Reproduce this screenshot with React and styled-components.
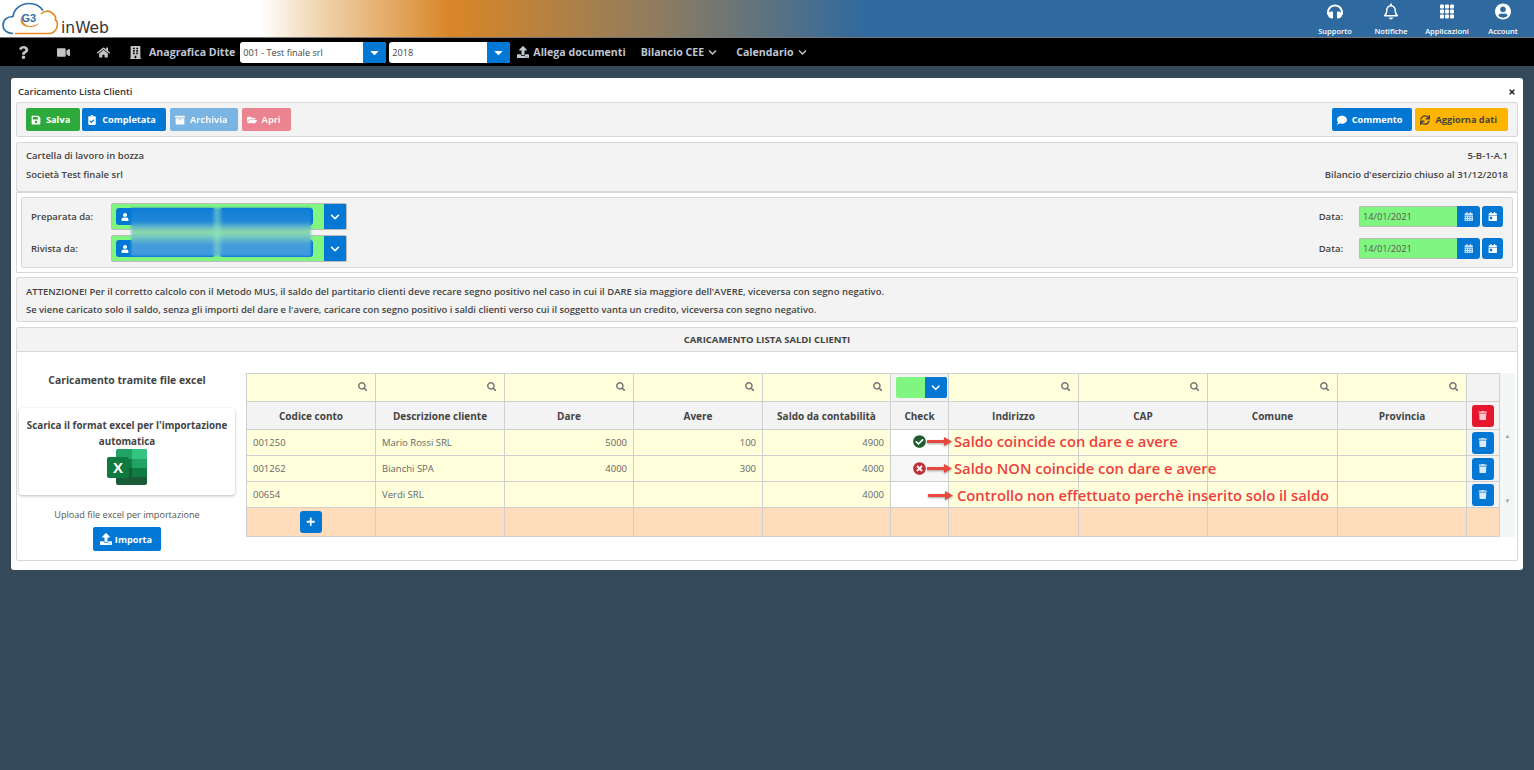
import React from "react";
import styled, { createGlobalStyle } from "styled-components";
import {
  FaQuestion, FaVideo, FaHome, FaBuilding, FaUpload, FaChevronDown, FaSave, FaClipboardCheck,
  FaArchive, FaFolderOpen, FaComment, FaSync, FaUser, FaCalendarAlt, FaCalendarDay, FaSearch,
  FaTrash, FaPlus, FaCheckCircle, FaTimesCircle, FaTimes, FaCaretDown, FaUserCircle,
  FaHeadphones, FaRegBell,
} from "react-icons/fa";
import { BsGrid3X3GapFill } from "react-icons/bs";

const GlobalStyle = createGlobalStyle`
  html, body { margin: 0; padding: 0; height: 100%; }
  body {
    background: #34495a;
    font-family: "Open Sans", "Liberation Sans", sans-serif;
    font-size: 9.5px;
    color: #444;
  }
`;

const Page = styled.div`
  min-height: 770px;
  background: #34495a;
`;

// top band with logo and the four shortcuts
const TopBar = styled.header`
  height: 37px;
  display: flex;
  justify-content: space-between;
  background: linear-gradient(90deg, #fff 0, #fff 260px, #f0d4ae 320px, #d98627 450px, #8d7c60 660px, #2e69a0 870px, #2e69a0 100%);
  border-bottom: 1px solid #777;
`;

const Logo = styled.div`
  display: flex;
  align-items: flex-end;
`;

const LogoWord = styled.span`
  font-family: "DejaVu Sans", sans-serif;
  font-size: 15.5px;
  color: #333;
  line-height: 18px;
`;

const Shortcuts = styled.nav`
  display: flex;
  padding-right: 3px;
`;

const Shortcut = styled.a`
  width: 56px;
  display: flex;
  flex-direction: column;
  align-items: center;
  color: #fff;
  font-size: 7.5px;
  font-weight: 600;
  padding-top: 2px;
  svg { font-size: ${(p) => p.$is || 16}px; height: 19px; margin-bottom: 5px; }
`;

const NavBar = styled.div`
  height: 28px;
  background: #000;
  display: flex;
  align-items: center;
  color: #bfc6d4;
  font-size: 10.6px;
  font-weight: 700;
`;

const NavIcon = styled.span`
  width: ${(p) => p.$w}px;
  display: flex;
  justify-content: center;
  font-size: 13px;
  color: #c4c4c4;
`;

const NavLink = styled.a`
  display: flex;
  align-items: center;
  gap: 4px;
  margin-left: ${(p) => p.$ml || 0}px;
  white-space: nowrap;
  svg { font-size: ${(p) => p.$is || 9}px; }
`;

const NavSelect = styled.div`
  width: ${(p) => p.$w}px;
  height: 21px;
  margin-left: ${(p) => p.$ml}px;
  display: flex;
  background: #fff;
  border-radius: 3px;
  overflow: hidden;
  color: #444;
  font-size: 9.1px;
  font-weight: 400;
`;

const NavSelectValue = styled.div`
  flex: 1;
  display: flex;
  align-items: center;
  padding-left: 3px;
`;

const BlueCaret = styled.div`
  width: 23px;
  background: #0277d4;
  color: #fff;
  display: flex;
  align-items: center;
  justify-content: center;
  font-size: 13px;
`;

const Card = styled.main`
  margin: 12px 11px 0;
  height: 492px;
  box-sizing: border-box;
  background: #fff;
  border-radius: 3px;
  padding: 0 5px;
`;

const CardTitle = styled.div`
  height: 24px;
  box-sizing: border-box;
  padding: 3px 2px 0 2px;
  display: flex;
  align-items: center;
  justify-content: space-between;
  font-weight: 600;
  color: #333;
  svg { font-size: 8px; color: #222; }
`;

const Panel = styled.section`
  background: #f3f3f3;
  border: 1px solid #d8d8d8;
  border-radius: 2px;
  box-sizing: border-box;
`;

const Toolbar = styled(Panel)`
  height: 35px;
  margin-bottom: 5px;
  display: flex;
  align-items: center;
  justify-content: space-between;
  padding: 0 9px;
`;

const ButtonGroup = styled.div`
  display: flex;
  gap: ${(p) => p.$gap || 2}px;
`;

const Btn = styled.button`
  height: ${(p) => p.$h || 23}px;
  border: 0;
  border-radius: 2px;
  padding: 0 ${(p) => p.$pr || 10}px 0 5px;
  margin-left: ${(p) => p.$ml || 0}px;
  background: ${(p) => p.$bg || "#0277d4"};
  color: ${(p) => p.$fg || "#fff"};
  opacity: ${(p) => (p.$off ? 0.5 : 1)};
  font-family: inherit;
  font-size: 9.2px;
  font-weight: 700;
  display: flex;
  align-items: center;
  gap: 5px;
  svg { font-size: 10px; }
`;

const ImportBtn = styled(Btn)`
  padding: 0 9px 0 7px;
  gap: 2px;
  svg { font-size: 12px; margin-right: 1px; }
`;

const InfoPanel = styled(Panel)`
  height: 50px;
  padding: 6px 9px 0;
  display: flex;
  flex-direction: column;
  gap: 6px;
  font-weight: 600;
  color: #444;
`;

const InfoRow = styled.div`
  display: flex;
  justify-content: space-between;
  line-height: 13px;
`;

const OuterFrame = styled.div`
  border: 1px solid #d8d8d8;
  padding: 4px;
  margin-bottom: 4px;
  height: 81px;
  box-sizing: border-box;
`;

const SignPanel = styled(Panel)`
  height: 100%;
  padding: 5px 9px 0 9px;
  position: relative;
`;

const SignRow = styled.div`
  height: 27px;
  margin-bottom: 5px;
  display: flex;
  align-items: center;
`;

const SignLabel = styled.div`
  width: 80px;
  font-weight: 600;
`;

const UserSelect = styled.div`
  width: 236px;
  height: 27px;
  box-sizing: border-box;
  border: 1px solid #bbb;
  background: #80f580;
  border-radius: 2px;
  overflow: hidden;
  display: flex;
  align-items: stretch;
`;

const UserTags = styled.div`
  flex: 1;
  padding: 4px 11px 4px 4px;
  display: flex;
  gap: 5px;
`;

const UserTag = styled.div`
  flex: ${(p) => p.$f};
  background: #0277d4;
  border-radius: 3px;
  color: #fff;
  display: flex;
  align-items: center;
  padding-left: 5px;
  font-size: 8px;
`;

const WideCaret = styled(BlueCaret)`
  width: 22px;
  font-size: 10px;
`;

// redacted names in the screenshot: blurred strip over both selects
const Blur = styled.div`
  position: absolute;
  left: 109px;
  top: 10px;
  width: 180px;
  height: 48px;
  background:
    linear-gradient(90deg, transparent 45%, rgba(150, 235, 190, 0.45) 47%, rgba(150, 235, 190, 0.45) 48.5%, transparent 51%),
    linear-gradient(180deg, #0f7cd6 0, #2088d8 28%, #6dbfc4 42%, #8fdcaa 50%, #74c8c0 60%, #459ddc 76%, #3f98de 100%);
  filter: blur(0.8px);
`;

const DateField = styled.div`
  margin-left: auto;
  display: flex;
  align-items: center;
  font-weight: 600;
`;

const DateInput = styled.div`
  width: 98px;
  height: 21px;
  margin-left: 16px;
  background: #80f580;
  border: 1px solid #bbb;
  border-right: 0;
  border-radius: 2px 0 0 2px;
  padding-left: 3px;
  box-sizing: border-box;
  line-height: 19px;
  font-size: 9.2px;
  font-weight: 400;
  color: #555;
`;

const IconBtn = styled.button`
  width: ${(p) => p.$w || 22}px;
  height: ${(p) => p.$h || 22}px;
  border: 0;
  padding: 0;
  margin-left: ${(p) => p.$ml || 0}px;
  border-radius: ${(p) => p.$r || "3px"};
  background: ${(p) => p.$bg || "#0277d4"};
  color: ${(p) => p.$fg || "#fff"};
  display: flex;
  align-items: center;
  justify-content: center;
  font-size: 9.5px;
`;

const PlusBtn = styled(IconBtn)`
  margin: 0 auto;
`;

const NoticePanel = styled(Panel)`
  height: 45px;
  padding: 7px 9px 0;
  margin-bottom: 5px;
  display: flex;
  flex-direction: column;
  gap: 5px;
  line-height: 13px;
  font-weight: 600;
  color: #444;
`;

const NoticeLine = styled.div`
  font-size: ${(p) => p.$fs}px;
`;

const LoadPanel = styled.section`
  border: 1px solid #d8d8d8;
  border-radius: 2px;
  height: 234px;
  box-sizing: border-box;
`;

const LoadHeader = styled.div`
  height: 24px;
  box-sizing: border-box;
  background: #f3f3f3;
  border-bottom: 1px solid #d8d8d8;
  display: flex;
  align-items: center;
  justify-content: center;
  font-weight: 700;
  color: #444;
`;

const LoadBody = styled.div`
  display: flex;
  align-items: flex-start;
  padding: 21px 3px 0 2px;
`;

const ExcelCol = styled.aside`
  width: 216px;
  flex-shrink: 0;
  margin-right: 11px;
  display: flex;
  flex-direction: column;
  align-items: center;
`;

const ExcelHeading = styled.div`
  font-size: 10.4px;
  font-weight: 700;
  height: 35px;
  color: #444;
`;

const ExcelCard = styled.div`
  width: 100%;
  height: 87px;
  box-sizing: border-box;
  border-radius: 3px;
  box-shadow: 0 1px 3px rgba(0, 0, 0, 0.28);
  padding-top: 10px;
  display: flex;
  flex-direction: column;
  align-items: center;
  text-align: center;
  font-size: 9.8px;
  font-weight: 700;
  line-height: 15.5px;
`;

const ExcelSvg = styled.svg`
  margin-top: -1px;
`;

const UploadNote = styled.div`
  margin: 13px 0 6px;
  line-height: 13px;
  color: #555;
  font-size: 9.1px;
`;

const TableWrap = styled.div`
  position: relative;
  flex: none;
  display: flex;
`;

const Grid = styled.table`
  border-collapse: collapse;
  table-layout: fixed;
  width: 1253px;
  td, th { border: 1px solid #cfcfcf; padding: 0 6px; box-sizing: border-box; }
`;

const FilterRow = styled.tr`
  height: 28px;
  background: #ffffdc;
`;

const FilterCell = styled.td`
  text-align: right;
  color: #777;
  font-size: 9.5px;
  && { padding-right: 8px; }
`;

const CheckFilterCell = styled.td`
  background: #f3f3f3;
  && { padding: 0 0 0 5px; }
`;

const HeadCell = styled.th`
  height: 28px;
  background: #f3f3f3;
  font-weight: 700;
  font-size: 10px;
  color: #444;
`;

const DataRow = styled.tr`
  height: 26px;
  background: #ffffdc;
`;

const DataCell = styled.td`
  color: #666;
  font-size: 9.5px;
  text-align: ${(p) => p.$align || "left"};
  background: ${(p) => p.$bg || "transparent"};
`;

const ActionCell = styled.td`
  background: #f3f3f3;
  && { padding: 0 5px; }
`;

const TotalRow = styled.tr`
  height: 29px;
  background: #ffdcbc;
`;

const CheckFilter = styled.div`
  width: 51px;
  height: 21px;
  display: flex;
  border-radius: 2px;
  overflow: hidden;
  background: #80f580;
`;

const CheckFilterGap = styled.span`
  flex: 1;
`;

const Scrollbar = styled.div`
  width: 15px;
  height: 164px;
  background: #f3f6f7;
  color: #a0a0a0;
  font-size: 6px;
  display: flex;
  flex-direction: column;
  justify-content: space-between;
  align-items: center;
  padding: 59px 0 32px;
  box-sizing: border-box;
`;

// red notes drawn over the table
const Note = styled.div`
  position: absolute;
  left: ${(p) => p.$x}px;
  top: ${(p) => p.$y}px;
  height: 20px;
  display: flex;
  align-items: center;
  color: #ee3f3f;
  font-size: 14.75px;
  font-weight: 600;
  white-space: nowrap;
`;

const StatusIcon = styled.span`
  display: flex;
  font-size: 13px;
  color: ${(p) => p.$c};
  margin-right: 1px;
`;

const ArrowSvg = styled.svg`
  margin-right: ${(p) => p.$mr || 2}px;
  filter: drop-shadow(0 1px 1px rgba(0, 0, 0, 0.35));
`;

const Arrow = ({ mr }) => (
  <ArrowSvg $mr={mr} width="25" height="9" viewBox="0 0 25 9">
    <path d="M0 3h17V0l8 4.500-8 4.500V6H0z" fill="#e8483f" />
  </ArrowSvg>
);

const Cloud = () => (
  <svg width="61" height="37" viewBox="0 0 61 37">
    <path d="M13 33.500C7 33.500 3 30 3 25.500 3 20 7 16.500 13 16.500 14 9 21 3.500 29 3.500c6 0 11 2.500 14 7" fill="none" stroke="#2e6fa8" strokeWidth="1.7" />
    <path d="M41 14c3-3 8-4 11-1 3 2 4 5 3.500 7 3 2 3 11-5 13.500H15" fill="none" stroke="#e58a25" strokeWidth="1.7" />
    <path d="M22 16c-4 6 1 12 9 11 4 0 7-2 8-4-4 3-10 4-13 2-3-2-4-5-4-9z" fill="#e58a25" />
    <text x="21.500" y="21.500" fontSize="11" fontWeight="700" fill="#2e6fa8" fontFamily="Liberation Sans">G3</text>
  </svg>
);

const ExcelLogo = () => (
  <ExcelSvg width="41" height="38" viewBox="0 0 41 38">
    <path d="M11 1h27a2 2 0 0 1 2 2v8H9V3a2 2 0 0 1 2-2z" fill="#21a366" />
    <path d="M25 1h13a2 2 0 0 1 2 2v8H25z" fill="#33c481" />
    <rect x="9" y="11" width="31" height="9" fill="#107c41" />
    <rect x="25" y="11" width="15" height="9" fill="#21a366" />
    <rect x="9" y="20" width="31" height="9" fill="#185c37" />
    <rect x="25" y="20" width="15" height="9" fill="#107c41" />
    <path d="M9 29h31v6a2 2 0 0 1-2 2H11a2 2 0 0 1-2-2z" fill="#185c37" />
    <rect x="0" y="9" width="22" height="21" rx="2" fill="#0f7a40" />
    <text x="11" y="25" textAnchor="middle" fontSize="15" fontWeight="700" fill="#fff" fontFamily="Liberation Sans">X</text>
  </ExcelSvg>
);

const colWidths = [129, 129, 129, 129, 128, 58, 130, 129, 130, 129, 33];

const rows = [
  { code: "001250", name: "Mario Rossi SRL", dare: "5000", avere: "100", saldo: "4900", check: "#fff" },
  { code: "001262", name: "Bianchi SPA", dare: "4000", avere: "300", saldo: "4000", check: "#f6f6f6" },
  { code: "00654", name: "Verdi SRL", dare: "", avere: "", saldo: "4000", check: "#fff" },
];

const headers = ["Codice conto", "Descrizione cliente", "Dare", "Avere", "Saldo da contabilità", "Check", "Indirizzo", "CAP", "Comune", "Provincia"];

const SignLine = ({ label }) => (
  <SignRow>
    <SignLabel>{label}</SignLabel>
    <UserSelect>
      <UserTags>
        <UserTag $f={99}><FaUser /></UserTag>
        <UserTag $f={93} />
      </UserTags>
      <WideCaret><FaChevronDown /></WideCaret>
    </UserSelect>
    <DateField>
      Data:
      <DateInput>14/01/2021</DateInput>
      <IconBtn $r="0 3px 3px 0" $w={23} $h={21} $fg="#cfe3f7"><FaCalendarAlt /></IconBtn>
      <IconBtn $ml={2} $w={21} $h={21}><FaCalendarDay /></IconBtn>
    </DateField>
  </SignRow>
);

export default function App() {
  return (
    <Page>
      <GlobalStyle />
      <TopBar>
        <Logo>
          <Cloud />
          <LogoWord>inWeb</LogoWord>
        </Logo>
        <Shortcuts>
          <Shortcut><FaHeadphones />Supporto</Shortcut>
          <Shortcut $is={14}><FaRegBell />Notifiche</Shortcut>
          <Shortcut><BsGrid3X3GapFill />Applicazioni</Shortcut>
          <Shortcut><FaUserCircle />Account</Shortcut>
        </Shortcuts>
      </TopBar>
      <NavBar>
        <NavIcon $w={47}><FaQuestion /></NavIcon>
        <NavIcon $w={32}><FaVideo /></NavIcon>
        <NavIcon $w={49}><FaHome /></NavIcon>
        <NavIcon $w={14}><FaBuilding /></NavIcon>
        <NavLink $ml={7}>Anagrafica Ditte</NavLink>
        <NavSelect $w={146} $ml={5}>
          <NavSelectValue>001 - Test finale srl</NavSelectValue>
          <BlueCaret><FaCaretDown /></BlueCaret>
        </NavSelect>
        <NavSelect $w={121} $ml={3}>
          <NavSelectValue>2018</NavSelectValue>
          <BlueCaret><FaCaretDown /></BlueCaret>
        </NavSelect>
        <NavLink $ml={7} $is={12}><FaUpload />Allega documenti</NavLink>
        <NavLink $ml={15}>Bilancio CEE <FaChevronDown /></NavLink>
        <NavLink $ml={19}>Calendario <FaChevronDown /></NavLink>
      </NavBar>
      <Card>
        <CardTitle>
          Caricamento Lista Clienti
          <FaTimes />
        </CardTitle>
        <Toolbar>
          <ButtonGroup>
            <Btn $bg="#2eaa3c"><FaSave />Salva</Btn>
            <Btn><FaClipboardCheck />Completata</Btn>
            <Btn $off $ml={2}><FaArchive />Archivia</Btn>
            <Btn $bg="#e6162f" $off $ml={2}><FaFolderOpen />Apri</Btn>
          </ButtonGroup>
          <ButtonGroup $gap={3}>
            <Btn><FaComment />Commento</Btn>
            <Btn $bg="#ffb400" $fg="#444" $pr={11}><FaSync />Aggiorna dati</Btn>
          </ButtonGroup>
        </Toolbar>
        <InfoPanel>
          <InfoRow><span>Cartella di lavoro in bozza</span><span>5-B-1-A.1</span></InfoRow>
          <InfoRow><span>Società Test finale srl</span><span>Bilancio d'esercizio chiuso al 31/12/2018</span></InfoRow>
        </InfoPanel>
        <OuterFrame>
          <SignPanel>
            <SignLine label="Preparata da:" />
            <SignLine label="Rivista da:" />
            <Blur />
          </SignPanel>
        </OuterFrame>
        <NoticePanel>
          <NoticeLine $fs={9.5}>ATTENZIONE! Per il corretto calcolo con il Metodo MUS, il saldo del partitario clienti deve recare segno positivo nel caso in cui il DARE sia maggiore dell'AVERE, viceversa con segno negativo.</NoticeLine>
          <NoticeLine $fs={9.45}>Se viene caricato solo il saldo, senza gli importi del dare e l'avere, caricare con segno positivo i saldi clienti verso cui il soggetto vanta un credito, viceversa con segno negativo.</NoticeLine>
        </NoticePanel>
        <LoadPanel>
          <LoadHeader>CARICAMENTO LISTA SALDI CLIENTI</LoadHeader>
          <LoadBody>
            <ExcelCol>
              <ExcelHeading>Caricamento tramite file excel</ExcelHeading>
              <ExcelCard>
                Scarica il format excel per l'importazione automatica
                <ExcelLogo />
              </ExcelCard>
              <UploadNote>Upload file excel per importazione</UploadNote>
              <ImportBtn $h={24}><FaUpload />Importa</ImportBtn>
            </ExcelCol>
            <TableWrap>
              <Grid>
                <colgroup>
                  {colWidths.map((w, i) => <col key={i} style={{ width: w }} />)}
                </colgroup>
                <tbody>
                  <FilterRow>
                    {headers.map((h, i) => i === 5
                      ? (
                        <CheckFilterCell key={h}>
                          <CheckFilter>
                            <CheckFilterGap />
                            <IconBtn $r="0" $h={21}><FaChevronDown /></IconBtn>
                          </CheckFilter>
                        </CheckFilterCell>
                      )
                      : <FilterCell key={h}><FaSearch /></FilterCell>)}
                    <ActionCell />
                  </FilterRow>
                  <tr>
                    {headers.map((h) => <HeadCell key={h}>{h}</HeadCell>)}
                    <ActionCell>
                      <IconBtn $bg="#e6162f" $fg="#ffc9cf"><FaTrash /></IconBtn>
                    </ActionCell>
                  </tr>
                  {rows.map((r) => (
                    <DataRow key={r.code}>
                      <DataCell>{r.code}</DataCell>
                      <DataCell>{r.name}</DataCell>
                      <DataCell $align="right">{r.dare}</DataCell>
                      <DataCell $align="right">{r.avere}</DataCell>
                      <DataCell $align="right">{r.saldo}</DataCell>
                      <DataCell $bg={r.check} />
                      <DataCell />
                      <DataCell />
                      <DataCell />
                      <DataCell />
                      <ActionCell>
                        <IconBtn $fg="#dbe9fa"><FaTrash /></IconBtn>
                      </ActionCell>
                    </DataRow>
                  ))}
                  <TotalRow>
                    <td><PlusBtn><FaPlus /></PlusBtn></td>
                    <td /><td /><td /><td /><td /><td /><td /><td /><td /><td />
                  </TotalRow>
                </tbody>
              </Grid>
              <Scrollbar><span>▲</span><span>▼</span></Scrollbar>
              <Note $x={667} $y={58}>
                <StatusIcon $c="#1f5c2e"><FaCheckCircle /></StatusIcon><Arrow />Saldo coincide con dare e avere
              </Note>
              <Note $x={667} $y={85}>
                <StatusIcon $c="#c0303a"><FaTimesCircle /></StatusIcon><Arrow />Saldo NON coincide con dare e avere
              </Note>
              <Note $x={682} $y={112}>
                <Arrow mr={4} />Controllo non effettuato perchè inserito solo il saldo
              </Note>
            </TableWrap>
          </LoadBody>
        </LoadPanel>
      </Card>
    </Page>
  );
}
